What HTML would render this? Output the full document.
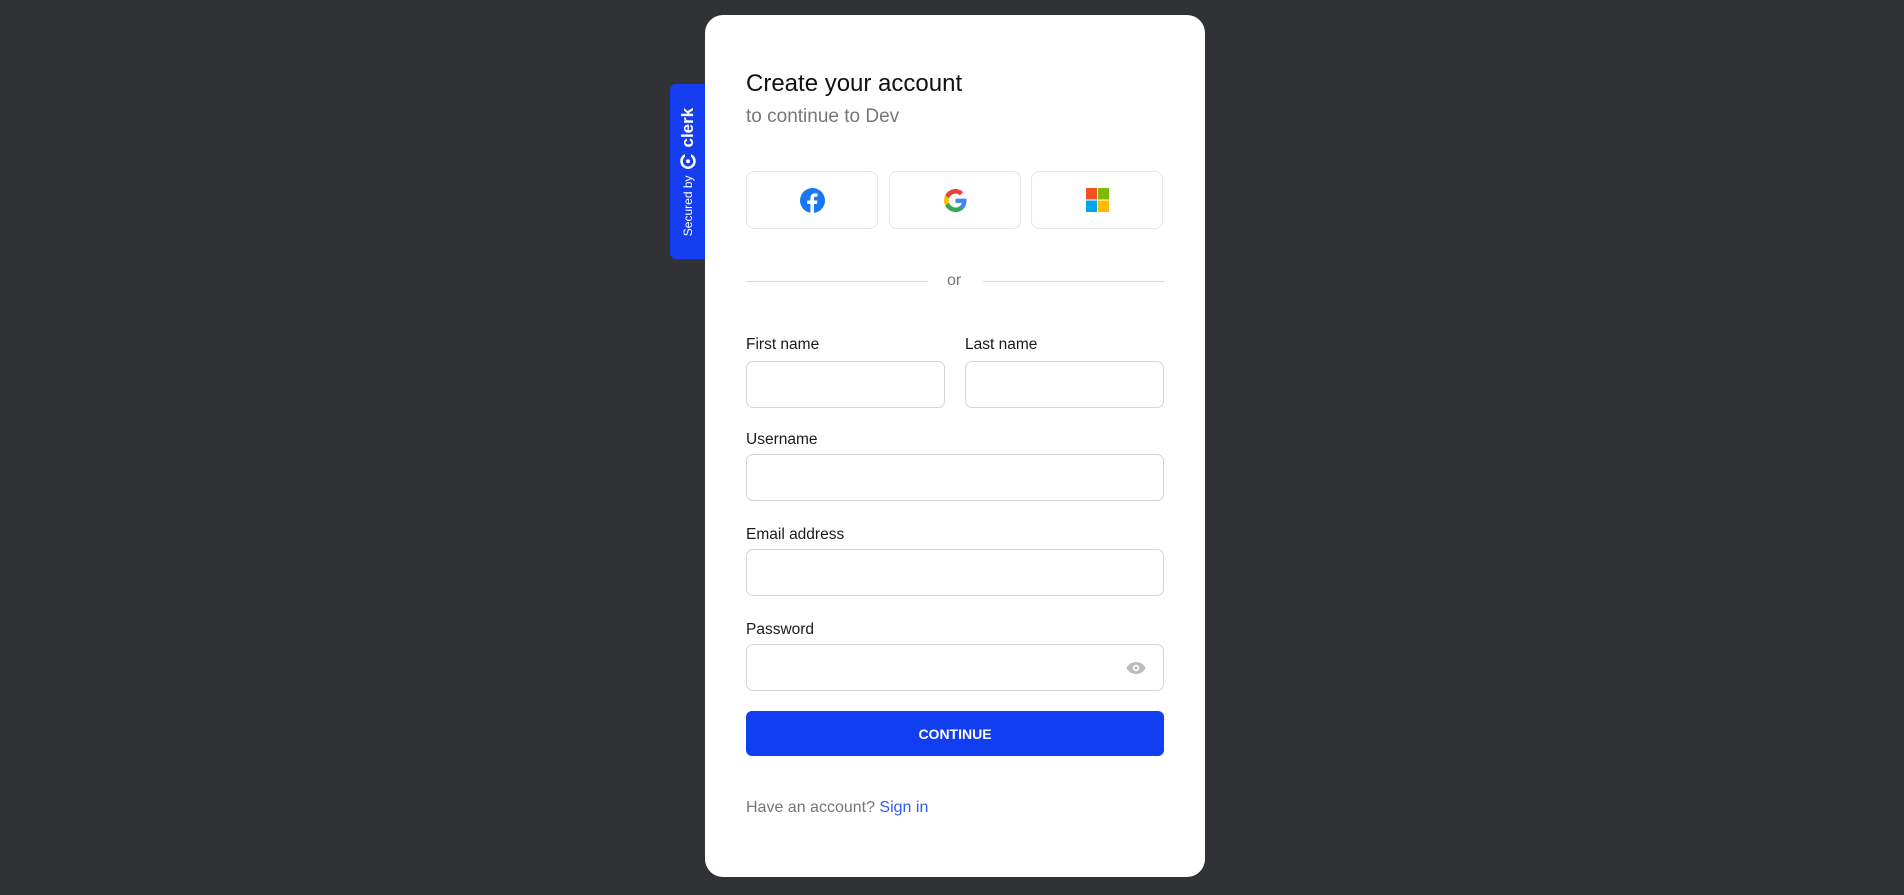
<!DOCTYPE html>
<html><head><meta charset="utf-8"><style>
*{box-sizing:border-box;margin:0;padding:0}
body{width:1904px;height:895px;background:#313236;font-family:"Liberation Sans",sans-serif;position:relative;overflow:hidden}
.card{position:absolute;left:705px;top:15px;width:500px;height:862px;background:#fff;border-radius:18px}
.a{position:absolute}
.lbl{position:absolute;left:41px;font-size:15.5px;color:#1a1a1a}
.inp{position:absolute;left:41px;width:418px;height:47px;border:1px solid #d5d5d8;border-radius:7px}
.sb{position:absolute;top:156px;width:132px;height:58px;border:1px solid #e6e6e9;border-radius:8px;display:flex;align-items:center;justify-content:center}
.tab{position:absolute;left:670px;top:84px;width:36px;height:175px;background:#153ef0;border-radius:6px 0 0 6px}
</style></head><body>
<div class="tab"><div style="position:absolute;left:18px;top:88px;transform:translate(-50%,-50%) rotate(-90deg);white-space:nowrap;color:#fff;display:flex;align-items:center;gap:6px"><span style="font-size:12px">Secured by</span><svg width="16" height="16" viewBox="0 0 16 16"><circle cx="8" cy="8" r="6.5" fill="none" stroke="#fff" stroke-width="2.5"/><circle cx="8" cy="8" r="2" fill="#fff"/><rect x="11" y="5" width="5" height="6" fill="#153ef0"/></svg><span style="font-size:17px;font-weight:bold">clerk</span></div></div>
<div class="card">
<div class="a" style="left:41px;top:55px;font-size:24px;color:#111">Create your account</div>
<div class="a" style="left:41px;top:91px;font-size:19px;color:#777">to continue to Dev</div>
<div class="sb" style="left:41px"><svg width="25" height="25" viewBox="0 0 24 24"><circle cx="12" cy="12" r="12" fill="#1877f2"/><path d="M13.4 24v-8.6h2.9l.4-3.4h-3.3V9.9c0-1 .3-1.6 1.7-1.6h1.8V5.3c-.3 0-1.4-.1-2.6-.1-2.6 0-4.3 1.6-4.3 4.4V12H7v3.4h3V24z" fill="#fff"/></svg></div>
<div class="sb" style="left:184px"><svg width="23" height="23" viewBox="0 0 24 24"><path d="M23.5 12.3c0-.8-.1-1.6-.2-2.3H12v4.5h6.5c-.3 1.5-1.1 2.7-2.4 3.6v3h3.9c2.2-2.1 3.5-5.1 3.5-8.8z" fill="#4285f4"/><path d="M12 24c3.2 0 6-1.1 7.9-2.9l-3.9-3c-1.1.7-2.4 1.2-4 1.2-3.1 0-5.7-2.1-6.7-4.9h-4v3.1C3.3 21.3 7.3 24 12 24z" fill="#34a853"/><path d="M5.3 14.4c-.5-1.5-.5-3.1 0-4.7V6.6h-4c-1.7 3.400-1.7 7.400 0 10.800z" fill="#fbbc05"/><path d="M12 4.800c1.700 0 3.300.6 4.500 1.800l3.400-3.400C17.800 1.200 15 0 12 0 7.300 0 3.300 2.700 1.300 6.600l4 3.100C6.300 6.900 8.900 4.800 12 4.800z" fill="#ea4335"/></svg></div>
<div class="sb" style="left:326px"><svg width="23" height="24" viewBox="0 0 23 24"><rect width="11" height="11.5" fill="#f25022"/><rect x="12" width="11" height="11.5" fill="#7fba00"/><rect y="12.5" width="11" height="11.5" fill="#00a4ef"/><rect x="12" y="12.5" width="11" height="11.5" fill="#ffb900"/></svg></div>
<div class="a" style="left:41px;top:266px;width:182px;height:1px;background:#d8d8da"></div>
<div class="a" style="left:278px;top:266px;width:181px;height:1px;background:#d8d8da"></div>
<div class="a" style="left:242px;top:257px;font-size:16px;color:#777">or</div>
<div class="lbl" style="top:321px">First name</div>
<div class="lbl" style="top:321px;left:260px">Last name</div>
<div class="inp" style="top:346px;width:199px"></div>
<div class="inp" style="top:346px;left:260px;width:199px"></div>
<div class="lbl" style="top:416px">Username</div>
<div class="inp" style="top:439px"></div>
<div class="lbl" style="top:511px">Email address</div>
<div class="inp" style="top:534px"></div>
<div class="lbl" style="top:606px">Password</div>
<div class="inp" style="top:629px"><svg class="a" style="left:379px;top:16px" width="20" height="14" viewBox="0 0 20 14"><path d="M10 1C5 1 1.5 4.5 0.5 7 1.5 9.5 5 13 10 13s8.500-3.500 9.500-6C18.500 4.500 15 1 10 1z" fill="#bbb"/><circle cx="10" cy="7" r="3.2" fill="#fff"/><circle cx="10" cy="7" r="1.6" fill="#bbb"/></svg></div>
<div class="a" style="left:41px;top:696px;width:418px;height:45px;background:#113ef0;border-radius:6px;color:#fff;font-weight:bold;font-size:14px;display:flex;align-items:center;justify-content:center">CONTINUE</div>
<div class="a" style="left:41px;top:784px;font-size:16px;color:#777">Have an account? <span style="color:#2f5cf5">Sign in</span></div>
</div>
</body></html>
